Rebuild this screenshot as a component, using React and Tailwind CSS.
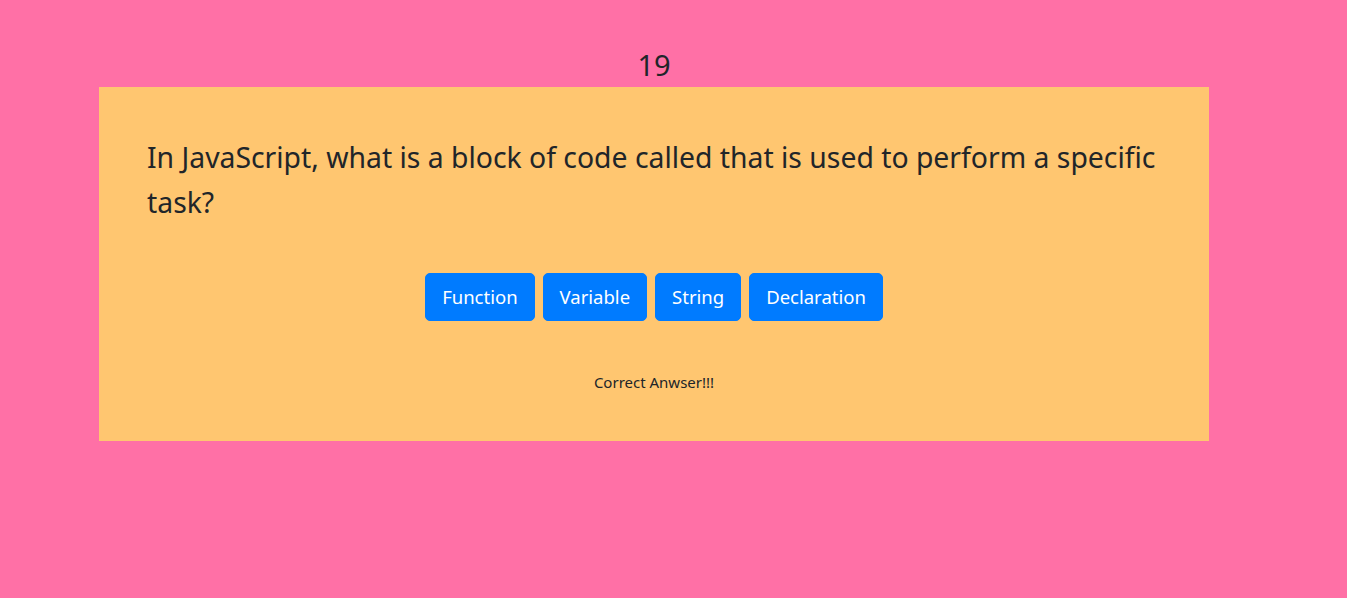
import React from "react";

export default function App() {
  const options = ["Function", "Variable", "String", "Declaration"];
  return (
    <div className="min-h-[598px] w-full bg-[#ff70a6] text-[#212529] font-['Noto_Sans',sans-serif]">
      <div className="flex w-[1110px] ml-[99px] flex-col">
        <div className="pt-[46px] pb-[3px] text-center text-[29px] leading-[38px]">19</div>
        <div className="bg-[#ffc670] p-12">
          <h3 className="text-[28.35px] leading-[45px]">
            In JavaScript, what is a block of code called that is used to perform a specific task?
          </h3>
          <div className="mt-12 flex justify-center gap-2">
            {options.map((o) => (
              <button
                key={o}
                className="h-12 rounded-[5px] border border-[#007bff] bg-[#007bff] px-4 text-[18.5px] leading-[30px] text-white"
              >
                {o}
              </button>
            ))}
          </div>
          <p className="mt-[51px] text-center text-[15px] leading-[21px]">Correct Anwser!!!</p>
        </div>
      </div>
    </div>
  );
}
